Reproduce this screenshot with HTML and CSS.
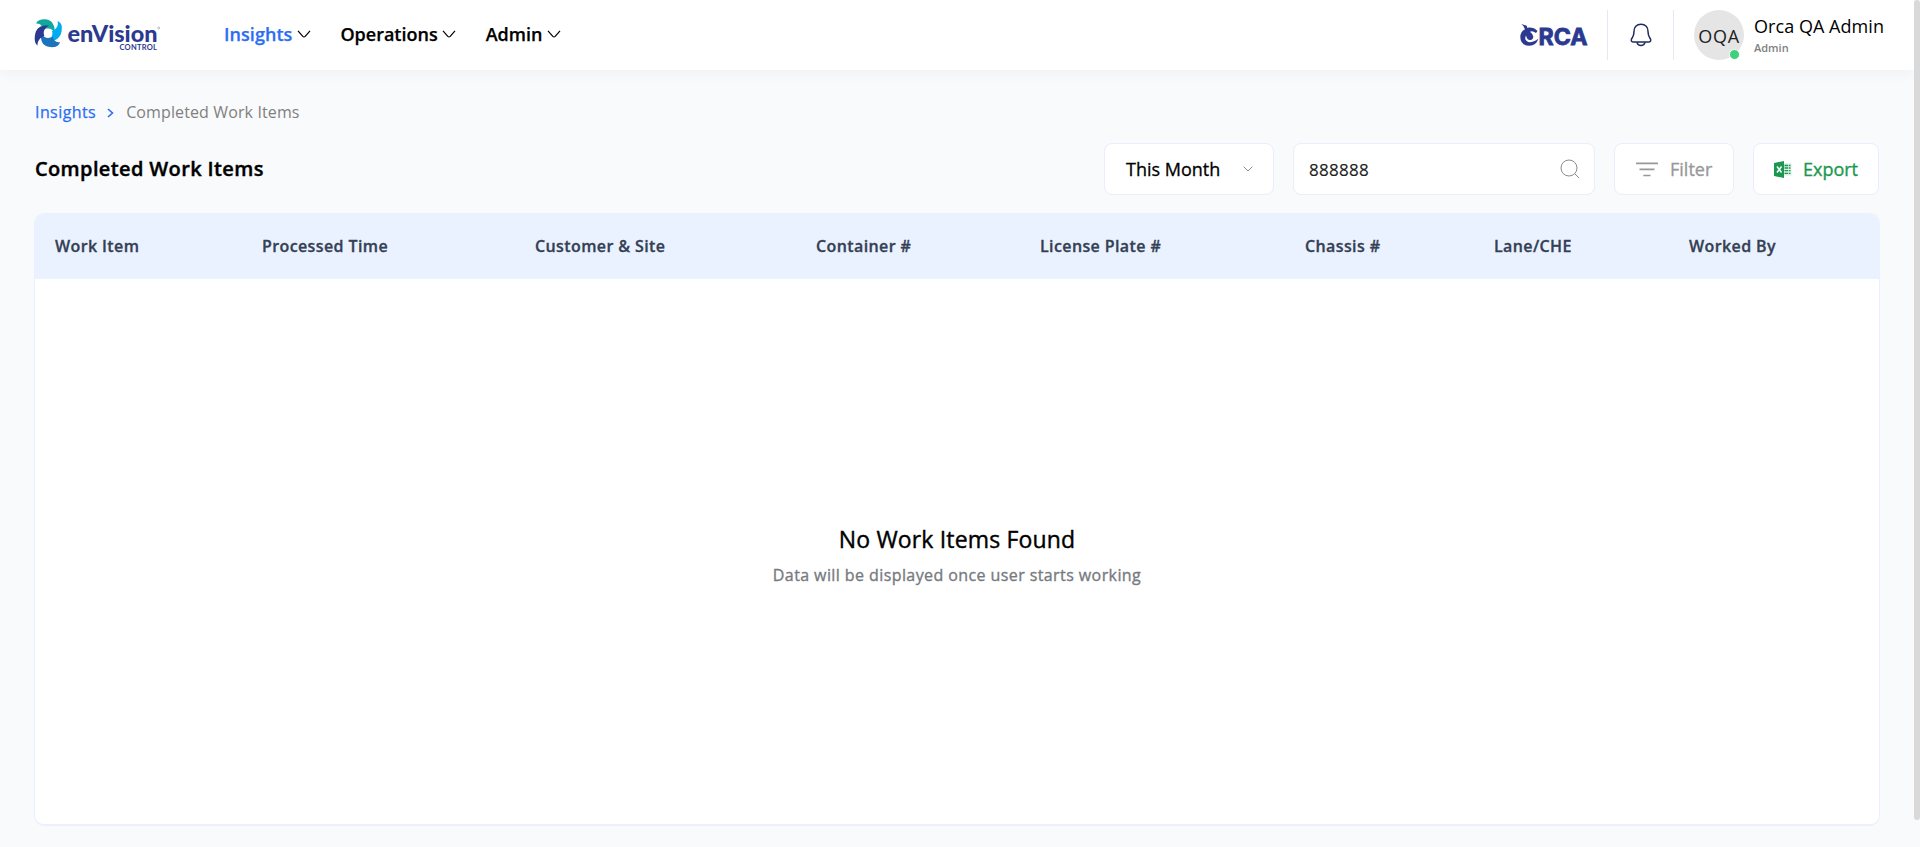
FILE: index.html
```html
<!DOCTYPE html>
<html lang="en">
<head>
<meta charset="utf-8">
<title>Completed Work Items</title>
<link rel="stylesheet" href="styles.css">
</head>
<body>
<div class="page">
  <header class="topbar">
    <svg class="logo" width="132" height="36" viewBox="34 17 132 36" role="img" aria-label="enVision Control">
      <path fill="#12a79d" d="M36 23.500C37.500 19.800 42.500 18.700 47 19.500C52 20.500 55 25 55 33C52.500 28.700 48.500 27 43 30C43 26 40 23 36 23.500Z"/>
      <path fill="#00aeef" d="M57.500 21.300C61.800 22.500 62.500 27 61.500 31.500C60.500 37.500 56.500 41.500 47 41.200C51.500 38.500 53.200 35.500 52 31C56.500 29.500 58.800 25.500 57.500 21.300Z"/>
      <path fill="#1c75bc" d="M60 42C59 46.500 54 48 48.500 46.800C43 45.600 40.300 41.500 41 33.500C44 38 48 39 53 36.800C53.500 40.500 56.500 43 60 42Z"/>
      <path fill="#2b3990" d="M37.500 45.500C34.500 43.500 34.200 38 35.300 33.500C37 27.500 41 25 49 25.600C44.500 28 42.800 31.500 44.300 36C39.800 37.500 37.500 41 37.500 45.500Z"/>
      <text class="logo-name" x="67.500" y="41.500" textLength="90" lengthAdjust="spacingAndGlyphs">enVision</text>
      <text class="logo-sub" x="119.500" y="50" textLength="37.500" lengthAdjust="spacing">CONTROL</text>
      <circle cx="158.700" cy="28" r="1" fill="none" stroke="#8b93c5" stroke-width=".6"/>
    </svg>
    <nav class="nav">
      <a class="nav-item active">Insights<svg class="chev" width="14" height="8" viewBox="0 0 14 8"><path d="M1 .8L5.800 6.300Q7 7.500 8.200 6.300L13 .8"/></svg></a>
      <a class="nav-item">Operations<svg class="chev" width="14" height="8" viewBox="0 0 14 8"><path d="M1 .8L5.800 6.300Q7 7.500 8.200 6.300L13 .8"/></svg></a>
      <a class="nav-item">Admin<svg class="chev" width="14" height="8" viewBox="0 0 14 8"><path d="M1 .8L5.800 6.300Q7 7.500 8.200 6.300L13 .8"/></svg></a>
    </nav>
    <div class="account">
      <svg class="orca" width="76" height="30" viewBox="1517 20 76 30" role="img" aria-label="Orca">
        <path fill="#2b3990" d="M1521.500 24L1525 25.300Q1527.500 25 1527 27.800Q1533.500 26.800 1537.500 31L1536 33Q1532.500 30.500 1530 31.700Q1535.500 36 1532 39.500Q1527.500 41.500 1526 35.500Q1523.500 40.500 1529 42.200Q1533.500 42.500 1538.500 38.500Q1536 45.800 1529.500 45.800Q1520.500 45.500 1520.300 37Q1520.500 31.500 1525 29.200Q1524 26 1521.500 24Z"/>
        <text class="orca-name" x="1538.500" y="45" textLength="49" lengthAdjust="spacingAndGlyphs">RCA</text>
      </svg>
      <div class="bell">
        <svg width="22" height="24" viewBox="0 0 22 24"><path d="M11 1.200C6.500 1.200 4 4.500 4 8.500C4 13 3 13.700 1.600 15.800C.7 17.600 1.600 19 3.500 19H18.500C20.400 19 21.300 17.600 20.400 15.800C19 13.700 18 13 18 8.500C18 4.500 15.500 1.200 11 1.200Z"/><path d="M7 19.300C8 23.600 14 23.600 15 19.300"/></svg>
      </div>
      <div class="avatar">OQA<span class="status"></span></div>
      <div class="who"><div class="who-name">Orca QA Admin</div><div class="who-role">Admin</div></div>
    </div>
  </header>
  <main class="main">
    <div class="crumbs"><a>Insights</a><svg width="7" height="10" viewBox="0 0 7 10"><path d="M1 1L5.500 5L1 9"/></svg><span>Completed Work Items</span></div>
    <div class="toolbar">
      <h1>Completed Work Items</h1>
      <div class="box month">This Month<svg width="10" height="6" viewBox="0 0 10 6"><path d="M.7.7L5 5L9.300.7"/></svg></div>
      <div class="box search">888888<svg width="20" height="20" viewBox="0 0 20 20"><circle cx="9" cy="9" r="8"/><path d="M14.700 14.700L19 19"/></svg></div>
      <div class="box filter"><svg width="22" height="15" viewBox="0 0 22 15"><path d="M0 1.300H22M3.500 7.300H18.500M7.300 13.500H14.500"/></svg>Filter</div>
      <div class="box export"><svg width="18" height="17" viewBox="0 0 18 17"><path fill="#dcefe4" d="M10 2.300H17.500V14.500H10Z"/><path fill="#1a9850" d="M0 2L10 0V17L0 15Z"/><path stroke="#1a9850" stroke-width="1.300" stroke-dasharray="3.500 .8" d="M10.500 4.500H16.500M10.500 7H16.500M10.500 9.700H16.500M10.500 12.300H16.500"/><path stroke="#fff" stroke-width="1.500" d="M3 5.500L7.500 11.500M7.500 5.500L3 11.500"/></svg>Export</div>
    </div>
    <section class="card">
      <div class="thead"><span>Work Item</span><span>Processed Time</span><span>Customer &amp; Site</span><span>Container #</span><span>License Plate #</span><span>Chassis #</span><span>Lane/CHE</span><span>Worked By</span></div>
      <div class="empty"><div class="empty-title">No Work Items Found</div><div class="empty-text">Data will be displayed once user starts working</div></div>
    </section>
  </main>
</div>
<div class="scrollbar"></div>
</body>
</html>
```
FILE: styles.css
```css
* { box-sizing: border-box; }
body { margin: 0; display: flex; height: 847px; overflow: hidden; background: #f9fafc; font-family: "Open Sans", "Noto Sans", sans-serif; color: #000; }
.page { width: 1914px; display: flex; flex-direction: column; }
.scrollbar { width: 6px; height: 820px; background: #d9d9d9; border-radius: 3px; }
svg { display: block; flex: none; fill: none; }
.topbar { height: 70px; background: #fff; display: flex; align-items: center; padding: 0 29px 0 34px; box-shadow: 0 4px 12px rgba(0,0,0,.035); }
.logo-name { font: 900 23px Lato, sans-serif; fill: #2b3990; }
.logo-sub { font: 700 7.500px Lato, sans-serif; fill: #2b3990; }
.orca-name { font: 700 23px Inter, sans-serif; fill: #2b3990; stroke: #2b3990; stroke-width: .8; }
.nav { display: flex; gap: 29.500px; margin: -2px 0 0 58px; }
.nav-item { display: flex; align-items: center; gap: 4.500px; font-size: 18px; line-height: 24px; font-weight: 600; -webkit-text-stroke: .25px; }
.chev { stroke: #000; stroke-width: 1.200; }
.nav-item.active { color: #2c6ef2; letter-spacing: .05px; }
.account { display: flex; align-items: center; margin-left: auto; padding-right: 1px; }
.bell { height: 50px; width: 67px; margin: 0 20px 0 14px; display: flex; align-items: center; justify-content: center; border-left: 1px solid #e6e7f3; border-right: 1px solid #e6e7f3; }
.bell svg { stroke: #1f2b56; stroke-width: 1.500; }
.avatar { position: relative; width: 50px; height: 50px; border-radius: 50%; background: #e5e5e5; font-size: 18px; line-height: 52px; text-align: center; color: #222; letter-spacing: .7px; }
.status { position: absolute; right: 4px; bottom: 0; width: 11px; height: 11px; border-radius: 50%; background: #40cf7d; border: 1px solid #fff; }
.who { width: 130px; margin-left: 10px; white-space: nowrap; }
.who-name { font-size: 18px; line-height: 24px; letter-spacing: .05px; }
.who-role { font-size: 11px; line-height: 16px; font-weight: 600; color: #7f7f7f; margin-top: 2px; }
.main { flex: 1; padding: 30px 35px 0; display: flex; flex-direction: column; }
.crumbs { display: flex; align-items: center; height: 24px; font-size: 16px; color: #808080; letter-spacing: .12px; }
.crumbs a { color: #2c6ef2; letter-spacing: .42px; -webkit-text-stroke: .25px; }
.crumbs svg { margin: 2px 12px 0 11px; stroke: #2c6ef2; stroke-width: 1.600; }
.toolbar { display: flex; align-items: center; gap: 19px; margin-top: 19px; height: 52px; }
h1 { margin: 0 auto 0 0; font-size: 20px; line-height: 28px; font-weight: 600; letter-spacing: .37px; -webkit-text-stroke: .4px; }
.box { height: 52px; display: flex; align-items: center; background: #fff; border: 1px solid #eaedfb; border-radius: 8px; font-size: 18px; }
.month { width: 170px; padding: 0 20px 0 21px; justify-content: space-between; -webkit-text-stroke: .3px; }
.month svg, .search svg { stroke: #8c8c8c; }
.search { width: 302px; padding: 0 14px 0 15px; justify-content: space-between; color: #222; font-size: 17px; letter-spacing: .3px; -webkit-text-stroke: .15px; }
.filter { width: 120px; padding-left: 21px; gap: 12px; color: #999; -webkit-text-stroke: .35px; }
.filter svg { stroke: #999; stroke-width: 1.700; }
.export { width: 126px; padding-left: 20px; gap: 11px; color: #1a9850; -webkit-text-stroke: .35px; }
.card { height: 613px; margin: 18px -1px 0; background: #fff; border: 1px solid #eaf0ff; border-bottom-width: 2px; border-radius: 10px; display: flex; flex-direction: column; overflow: hidden; }
.thead { height: 65px; display: grid; grid-template-columns: 207px 273px 281px 224px 265px 189px 195px 1fr; align-items: center; padding: 0 0 2px 20px; background: #ebf2ff; color: #344054; font-size: 16px; font-weight: 600; letter-spacing: .39px; -webkit-text-stroke: .3px; }
.empty { flex: 1; display: flex; flex-direction: column; align-items: center; justify-content: center; padding-top: 6px; }
.empty-title { font-size: 23px; line-height: 34px; letter-spacing: .15px; -webkit-text-stroke: .4px; }
.empty-text { font-size: 16px; line-height: 24px; margin-top: 7px; color: #777a80; letter-spacing: .41px; -webkit-text-stroke: .35px; }
```
